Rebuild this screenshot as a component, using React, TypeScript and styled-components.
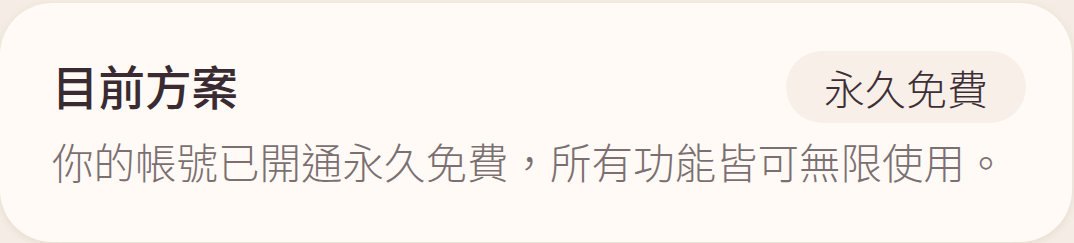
import { FC } from 'react';
import styled, { createGlobalStyle } from 'styled-components';

const GlobalStyle = createGlobalStyle`
  * {
    box-sizing: border-box;
  }

  body {
    margin: 0;
    background: #f5ede5;
    font-family: "Noto Sans CJK TC", "Noto Sans", sans-serif;
  }
`;

const App: FC = () => {
  return (
    <Page>
      <GlobalStyle />
      <PlanCard>
        <CardHeader>
          <Title>目前方案</Title>
          <PlanBadge>永久免費</PlanBadge>
        </CardHeader>
        <Description>你的帳號已開通永久免費，所有功能皆可無限使用。</Description>
      </PlanCard>
    </Page>
  );
};

const Page = styled.div`
  width: 1074px;
  height: 243px;
  padding: 3px 2px 1px 0;
  overflow: hidden;
`;

const PlanCard = styled.div`
  width: 100%;
  height: 239px;
  padding: 48px 46px 0 52px;
  border-radius: 52px;
  background: #fffaf5;
  box-shadow: 0 2px 8px rgba(120, 90, 60, 0.12);
  display: flex;
  flex-direction: column;
`;

const CardHeader = styled.div`
  height: 72px;
  display: flex;
  align-items: center;
  justify-content: space-between;
`;

const Title = styled.h2`
  margin: 0 0 4px;
  color: #3a2b32;
  font-size: 46.5px;
  font-weight: 500;
  line-height: 1;
`;

const PlanBadge = styled.div`
  height: 72px;
  padding: 0 38px;
  border-radius: 36px;
  background: #f8efe8;
  color: #3d2f36;
  font-size: 41px;
  font-weight: 300;
  display: flex;
  align-items: center;
`;

const Description = styled.p`
  margin: 14px 0 0;
  color: #7b6f72;
  font-size: 41.5px;
  font-weight: 300;
  line-height: 48px;
  white-space: nowrap;
`;

export default App;
